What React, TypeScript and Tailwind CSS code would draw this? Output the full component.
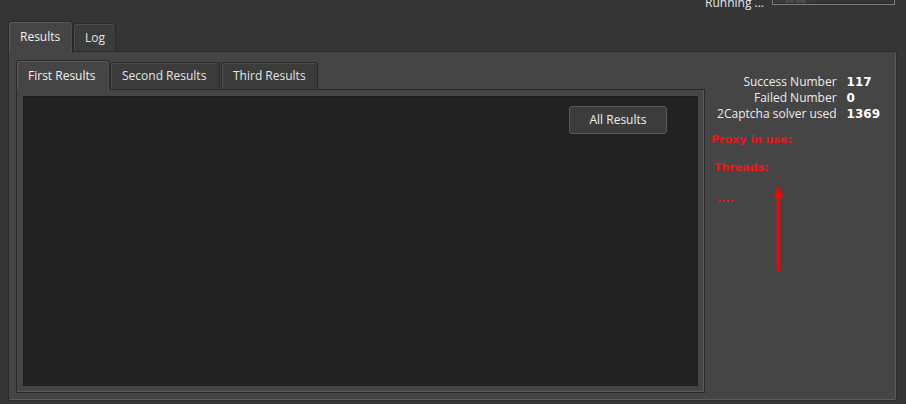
const innerTabs = [
  { label: "First Results", w: "w-[94px]", active: true },
  { label: "Second Results", w: "w-[110px]", active: false },
  { label: "Third Results", w: "w-[97px] ml-[1px]", active: false },
];

const stats = [
  { label: "Success Number", value: "117" },
  { label: "Failed Number", value: "0" },
  { label: "2Captcha solver used", value: "1369" },
];

function Tab({ label, active, className }: { label: string; active: boolean; className: string }) {
  return (
    <div
      className={`${className} flex items-center pl-[11px] border border-b-0 rounded-t-[3px] ${
        active
          ? "relative z-10 -mb-px bg-[#454545] border-[#2a2a2a] shadow-[inset_1px_1px_0_#5a5a5a,inset_-1px_0_0_#505050] text-[#f0f0f0]"
          : "bg-[#3b3b3b] border-[#2a2a2a] shadow-[inset_1px_1px_0_#4e4e4e] text-[#e4e4e4]"
      }`}
    >
      {label}
    </div>
  );
}

export default function App() {
  return (
    <div className="w-[906px] h-[404px] overflow-hidden bg-[#353535] text-[12px] leading-[16px] text-[#e6e6e6] font-['Open_Sans',sans-serif]">
      <div className="-mt-[10px] h-[15px] flex items-start justify-end gap-[8px] pr-[11px]">
        <span className="mt-[5px]">Running ...</span>
        <div className="flex h-[15px] w-[123px] border border-[#7c7c7c] bg-[#2e2e2e] p-px gap-px">
          <span className="w-[10px] bg-[#3a3a3a]" />
          <span className="w-[10px] bg-[#4a4a4a]" />
          <span className="w-[10px] bg-[#4c4c4c]" />
          <span className="w-[10px] bg-[#383838]" />
          <span className="w-[10px] bg-[#363636]" />
          <span className="w-[10px] bg-[#363636]" />
          <span className="w-[10px] bg-[#363636]" />
          <span className="w-[10px] bg-[#363636]" />
          <span className="w-[10px] bg-[#363636]" />
          <span className="w-[10px] bg-[#363636]" />
          <span className="flex-1 bg-[#363636]" />
        </div>
      </div>

      {/* outer tab widget */}
      <div className="mt-[16px] ml-[8px] w-[889px]">
        <div className="flex items-end h-[30px]">
          <Tab label="Results" active className="w-[65px] h-[31px]" />
          <Tab label="Log" active={false} className="w-[43px] h-[28px]" />
        </div>
        <div className="h-[350px] flex border border-[#2a2a2a] rounded-b-[2px] rounded-tr-[2px] bg-[#454545] shadow-[inset_-1px_-1px_0_#5c5c5c] pl-[7px] pt-[8px]">
          {/* inner tab widget */}
          <div className="w-[689px] flex flex-col">
            <div className="flex items-end h-[29px]">
              {innerTabs.map((t) => (
                <Tab key={t.label} label={t.label} active={t.active} className={`${t.w} ${t.active ? "h-[30px]" : "h-[27px]"}`} />
              ))}
            </div>
            <div className="h-[304px] border border-[#2a2a2a] bg-[#454545] shadow-[inset_-1px_-1px_0_#5a5a5a] p-[6px]">
              <div className="h-full bg-[#232323] border border-[#1d1d1d] flex justify-end items-start pt-[9px] pr-[30px]">
                <button className="w-[98px] h-[28px] rounded-[3px] border border-[#5b5b5b] bg-[#3c3c3c] text-[#f0f0f0]">
                  All Results
                </button>
              </div>
            </div>
          </div>

          {/* stats column */}
          <div className="relative flex-1 flex flex-col">
            <div className="mt-[14px] grid grid-cols-[auto_auto] justify-end gap-x-[10px] pr-[16px]">
              {stats.map((s) => (
                <div key={s.label} className="contents">
                  <span className="text-right text-[#ececec]">{s.label}</span>
                  <span className="font-bold text-white font-['DejaVu_Sans',sans-serif]">{s.value}</span>
                </div>
              ))}
            </div>
            <div className="flex flex-col text-[11px] leading-[14px] font-bold text-[#f01414] font-['DejaVu_Sans',sans-serif]">
              <span className="mt-[11px] ml-[6px]">Proxy in use:</span>
              <span className="mt-[14px] ml-[9px]">Threads:</span>
              <span className="mt-[17px] ml-[12px]">....</span>
            </div>
            {/* red arrow annotation */}
            <svg className="absolute left-[67px] top-[125px]" width="12" height="88" viewBox="0 0 12 88">
              <path d="M6 0 L10.5 13 L1.5 13 Z" fill="#ff0000" />
              <rect x="4.5" y="10" width="3" height="76" fill="#ff0000" />
            </svg>
          </div>
        </div>
      </div>
    </div>
  );
}
